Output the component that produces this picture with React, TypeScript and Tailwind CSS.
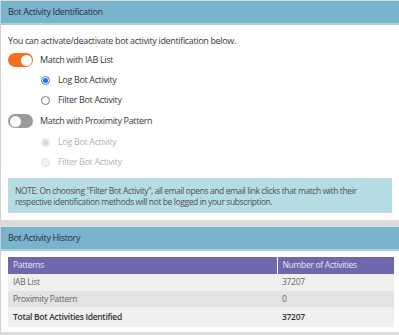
import React from "react";

function Toggle({ on }: { on: boolean }) {
  return (
    <div
      className={
        "relative h-[14px] w-[25px] shrink-0 rounded-full " +
        (on ? "bg-[#f37021]" : "bg-[#9b9b9b]")
      }
    >
      <div
        className={
          "absolute top-[1.5px] h-[11px] w-[11px] rounded-full bg-white " +
          (on ? "right-[1.5px]" : "left-[1.5px]")
        }
      />
    </div>
  );
}

function Radio({ checked, disabled, label }: { checked?: boolean; disabled?: boolean; label: string }) {
  return (
    <div className="flex h-[20px] items-center">
      <div
        className={
          "flex h-[9px] w-[9px] items-center justify-center rounded-full border " +
          (disabled ? "border-[#e0e0e0] bg-[#f2f2f2]" : checked ? "border-[#2f7de1] bg-white" : "border-[#777] bg-white")
        }
      >
        {checked && (
          <div className={"h-[5px] w-[5px] rounded-full " + (disabled ? "bg-[#d4d4d4]" : "bg-[#1a73e8]")} />
        )}
      </div>
      <span className={"ml-[8px] " + (disabled ? "text-[#b5b5b5]" : "text-[#3a3a3a]")}>{label}</span>
    </div>
  );
}

export default function App() {
  return (
    <div
      className="h-[335px] w-[399px] overflow-hidden bg-[#dcdcdc] text-[9px] tracking-[-0.35px] text-[#3a3a3a]"
      style={{ fontFamily: "'Open Sans', sans-serif" }}
    >
      <div className="mt-[1px] border-l border-[#d0d0d0] bg-white">
        <div className="flex h-[24px] items-center border-b-2 border-[#a9d0e0] bg-[#79b3cc] pl-[7px] text-[#26323a]">
          Bot Activity Identification
        </div>
        <div className="px-[7px] pb-[7px] pt-[8px]">
          <div className="h-[15px] leading-[15px]">You can activate/deactivate bot activity identification below.</div>
          <div className="mt-[5px] flex h-[14px] items-center">
            <Toggle on />
            <span className="ml-[7px]">Match with IAB List</span>
          </div>
          <div className="ml-[33px] mt-[3px]">
            <Radio checked label="Log Bot Activity" />
            <Radio label="Filter Bot Activity" />
          </div>
          <div className="mt-[4px] flex h-[14px] items-center">
            <Toggle on={false} />
            <span className="ml-[7px]">Match with Proximity Pattern</span>
          </div>
          <div className="ml-[33px] mt-[4px]">
            <Radio checked disabled label="Log Bot Activity" />
            <Radio disabled label="Filter Bot Activity" />
          </div>
          <div className="mt-[6px] h-[35px] bg-[#b7dde4] px-[7px] pb-[6px] pt-[7px] text-[8.5px] leading-[11px] tracking-[-0.4px] text-[#505050]">
            NOTE: On choosing "Filter Bot Activity", all email opens and email link clicks that match with their
            respective identification methods will not be logged in your subscription.
          </div>
        </div>
      </div>
      <div className="mt-[7px] border-l border-[#d0d0d0] bg-white">
        <div className="flex h-[24px] items-center border-b-2 border-[#a9d0e0] bg-[#79b3cc] pl-[7px] text-[#26323a]">
          Bot Activity History
        </div>
        <div className="px-[7px] pb-[5px] pt-[6px]">
          <table className="w-[386px] border-collapse text-[8.5px] tracking-[-0.3px]">
            <thead>
              <tr className="h-[17px] bg-[#6f68ae] text-left text-[#e8e6f4]">
                <th className="w-[269px] border-r border-white pl-[5px] font-normal">Patterns</th>
                <th className="pl-[5px] font-normal">Number of Activities</th>
              </tr>
            </thead>
            <tbody className="text-[#666]">
              <tr className="h-[17px] bg-[#f0f0f0]">
                <td className="pl-[5px]">IAB List</td>
                <td className="pl-[5px]">37207</td>
              </tr>
              <tr className="h-[16px] bg-[#e3e3e3]">
                <td className="pl-[5px]">Proximity Pattern</td>
                <td className="pl-[5px]">0</td>
              </tr>
              <tr className="h-[20px] bg-[#f0f0f0] font-semibold text-[#333]">
                <td className="pl-[5px]">Total Bot Activities Identified</td>
                <td className="pl-[5px]">37207</td>
              </tr>
            </tbody>
          </table>
        </div>
      </div>
    </div>
  );
}
